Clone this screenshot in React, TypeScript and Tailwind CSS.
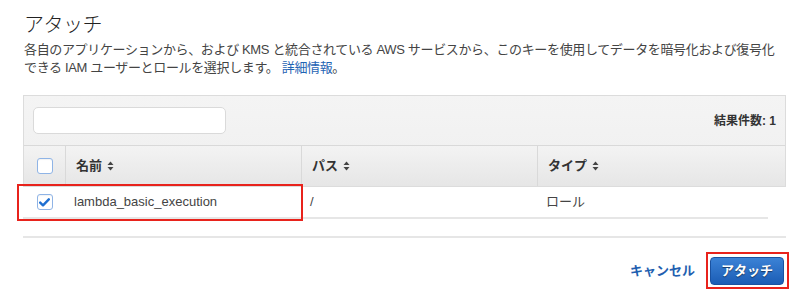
import React from 'react';

const SortIcon: React.FC = () => (
    <svg width="7" height="10" viewBox="0 0 7 10" className="ml-[5px] inline-block">
        <path d="M3.5 0.5 L6.5 4 L0.5 4 Z" fill="#444" />
        <path d="M3.5 9.5 L6.5 6 L0.5 6 Z" fill="#444" />
    </svg>
);

const Checkbox: React.FC<{ checked?: boolean }> = ({ checked }) => (
    <div className="w-[16px] h-[16px] rounded-[3px] border border-[#8fb4e6] bg-white flex items-center justify-center shadow-[inset_0_1px_1px_rgba(0,0,0,0.05)]">
        {checked && (
            <svg width="11" height="9" viewBox="0 0 11 9">
                <path d="M1.2 4.6 L4 7.3 L9.8 1.3" stroke="#1f6fd1" strokeWidth="2.4" fill="none" strokeLinecap="round" strokeLinejoin="round" />
            </svg>
        )}
    </div>
);

const HeaderCell: React.FC<{ label: string; last?: boolean }> = ({ label, last }) => (
    <div className={`flex items-center px-[10px] font-bold text-[13px] text-[#333] ${last ? '' : 'border-r border-[#d9d9d9]'}`}>
        {label}
        <SortIcon />
    </div>
);

const App: React.FC = () => {
    return (
        <div
            className="relative w-[800px] h-[291px] bg-white overflow-hidden pl-[24px] pr-[14px] pt-[10px]"
            style={{ fontFamily: '"Liberation Sans", "Noto Sans CJK JP", sans-serif' }}
        >
            <h1 className="text-[20px] leading-[30px] font-light text-[#222] tracking-[-0.5px]">アタッチ</h1>
            <p className="mt-[1px] text-[13px] leading-[18px] text-[#444] whitespace-nowrap tracking-[-0.35px]">
                各自のアプリケーションから、および KMS と統合されている AWS サービスから、このキーを使用してデータを暗号化および復号化
                <br />
                できる IAM ユーザーとロールを選択します。 <span className="text-[#1f64b4]">詳細情報</span>。
            </p>

            <div className="mt-[18px] ml-[-1px] w-[763px]">
                <div className="border border-[#dcdcdc] bg-gradient-to-b from-[#f4f4f4] to-[#efefef]">
                    <div className="h-[49px] flex items-center justify-between pl-[9px] pr-[9px]">
                        <div className="w-[193px] h-[27px] rounded-[5px] border border-[#dadada] bg-white" />
                        <div className="text-[12px] font-bold text-[#333]">結果件数: 1</div>
                    </div>
                    <div className="grid grid-cols-[42px_236px_236px_247px] h-[41px] border-t border-[#d9d9d9] bg-gradient-to-b from-[#f3f3f3] to-[#e6e6e6]">
                        <div className="flex items-center justify-center border-r border-[#d9d9d9]">
                            <Checkbox />
                        </div>
                        <HeaderCell label="名前" />
                        <HeaderCell label="パス" />
                        <HeaderCell label="タイプ" last />
                    </div>
                </div>
                <div className="w-[745px] grid grid-cols-[43px_236px_236px_230px] h-[32px] border-b-2 border-[#e6e6e6] text-[13px] text-[#444] items-center">
                    <div className="flex justify-center"><Checkbox checked /></div>
                    <div className="pl-[8px]">lambda_basic_execution</div>
                    <div className="pl-[8px]">/</div>
                    <div className="pl-[8px]">ロール</div>
                </div>
                <div className="mt-[17px] border-b-2 border-[#e6e6e6]" />
            </div>

            <div className="mt-[19px] flex justify-end items-center gap-[15px] pr-[2px]">
                <button className="text-[13px] font-bold text-[#1f5fb0]">キャンセル</button>
                <button className="w-[74px] h-[28px] rounded-[4px] border border-[#1a52a0] bg-gradient-to-b from-[#3b82d6] to-[#1b5db5] text-white text-[13px] font-bold [text-shadow:0_1px_1px_rgba(0,0,0,0.5)]">
                    アタッチ
                </button>
            </div>

            {/* annotation boxes */}
            <div className="absolute left-[17px] top-[184px] w-[286px] h-[37px] border-2 border-[#e8231c]" />
            <div className="absolute left-[706px] top-[252px] w-[83px] h-[37px] border-2 border-[#e8231c]" />
        </div>
    );
};

export default App;
